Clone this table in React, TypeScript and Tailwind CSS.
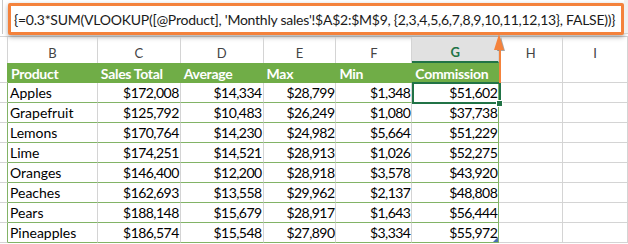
import React from "react";

const rows: string[][] = [
  ["Apples", "$172,008", "$14,334", "$28,799", "$1,348", "$51,602"],
  ["Grapefruit", "$125,792", "$10,483", "$26,249", "$1,080", "$37,738"],
  ["Lemons", "$170,764", "$14,230", "$24,982", "$5,664", "$51,229"],
  ["Lime", "$174,251", "$14,521", "$28,913", "$1,026", "$52,275"],
  ["Oranges", "$146,400", "$12,200", "$28,918", "$3,578", "$43,920"],
  ["Peaches", "$162,693", "$13,558", "$29,962", "$2,137", "$48,808"],
  ["Pears", "$188,148", "$15,679", "$28,917", "$1,643", "$56,444"],
  ["Pineapples", "$186,574", "$15,548", "$27,890", "$3,334", "$55,972"],
];

const W = [
  "w-[8px]",
  "w-[90px]",
  "w-[83px]",
  "w-[83px]",
  "w-[73px]",
  "w-[76px]",
  "w-[87px]",
  "w-[64px]",
  "w-[65px]",
];

const letters = ["", "B", "C", "D", "E", "F", "G", "H", "I"];
const headers = ["Product", "Sales Total", "Average", "Max", "Min", "Commission"];

export default function App() {
  return (
    <div
      className="relative w-[628px] h-[244px] overflow-hidden bg-white text-black"
      style={{ fontFamily: "Lato, 'Open Sans', sans-serif" }}
    >
      {/* formula bar */}
      <div className="flex h-[37px] border-b border-[#d4d4d4] bg-white">
        <div className="w-[8px] h-[34px] flex">
          <div className="ml-[2px] w-px h-full bg-[#c8c8c8]" />
        </div>
        <div className="mt-[3px] w-[616px] h-[32px] border-[3px] border-[#f4823c] rounded-[2px] bg-white shadow-[0_2px_5px_rgba(0,0,0,0.35)] flex items-center pl-[3px] whitespace-nowrap text-[14px] tracking-[-0.25px] text-[#1a1a1a]">
          {"{=0.3*SUM(VLOOKUP([@Product], 'Monthly sales'!$A$2:$M$9, {2,3,4,5,6,7,8,9,10,11,12,13}, FALSE))}"}
        </div>
        <div className="flex-1 h-[34px] bg-[#f0f0f0] border-b border-[#d4d4d4]" />
      </div>

      {/* column letters */}
      <div className="flex h-[26px]">
        {letters.map((l, i) => (
          <div
            key={i}
            className={`${W[i]} h-full border-r border-[#d4d4d4] flex items-center justify-center pt-[8px] text-[13px] ${
              i === 6
                ? "bg-[#e1e1e1] text-[#217346] font-bold border-b-2 border-b-[#217346]"
                : "text-[#444444]"
            }`}
          >
            {l}
          </div>
        ))}
      </div>

      {/* table header */}
      <div className="flex h-[20px]">
        {W.map((w, i) => {
          const inTable = i >= 1 && i <= 6;
          return (
            <div
              key={i}
              className={`${w} h-full flex items-center px-[3px] whitespace-nowrap text-[14px] ${
                inTable
                  ? "bg-[#70ad47] text-white font-bold tracking-[-0.3px]"
                  : i === 0
                  ? "border-r border-[#70ad47] border-b border-b-[#d4d4d4]"
                  : "border-r border-b border-[#d4d4d4]"
              }`}
            >
              {inTable ? headers[i - 1] : ""}
            </div>
          );
        })}
      </div>

      {/* data rows */}
      {rows.map((r, ri) => (
        <div key={ri} className="flex h-[20px]">
          {W.map((w, i) => {
            let cls = "";
            if (i === 0) cls = "border-r border-r-[#82b366] border-b border-b-[#d4d4d4]";
            else if (i >= 1 && i <= 5)
              cls = "border-r border-r-[#d4d4d4] border-b border-b-[#82b366]";
            else if (i === 6) cls = "border-r border-r-[#82b366] border-b border-b-[#82b366]";
            else cls = "border-r border-b border-[#d4d4d4]";
            const text = i >= 1 && i <= 6 ? r[i - 1] : "";
            return (
              <div
                key={i}
                className={`${w} h-full flex items-center whitespace-nowrap text-[14px] ${cls} ${
                  i === 1 ? "justify-start pl-[2px]" : "justify-end pr-[1px] tracking-[-0.55px]"
                } relative`}
              >
                {text}
                {ri === rows.length - 1 && i === 6 && (
                  <svg className="absolute right-0 bottom-0" width="5" height="5" viewBox="0 0 5 5">
                    <polygon points="5,0 5,5 0,5" fill="#4a6fb5" />
                  </svg>
                )}
              </div>
            );
          })}
        </div>
      ))}

      {/* selected cell */}
      <div className="absolute left-[412px] top-[82px] w-[89px] h-[22px] border-2 border-[#217346] pointer-events-none" />
      <div className="absolute left-[496px] top-[100px] w-[7px] h-[7px] bg-[#217346] border border-white" />

      {/* arrow */}
      <svg
        className="absolute left-[488px] top-[33px]"
        width="24"
        height="52"
        viewBox="0 0 24 52"
      >
        <polygon points="13,4 17,18 9,18" fill="rgba(0,0,0,0.35)" />
        <rect x="11" y="16" width="2" height="34" fill="#f4823c" />
        <polygon points="11,1 16,17 6,17" fill="#f4823c" />
      </svg>
    </div>
  );
}
